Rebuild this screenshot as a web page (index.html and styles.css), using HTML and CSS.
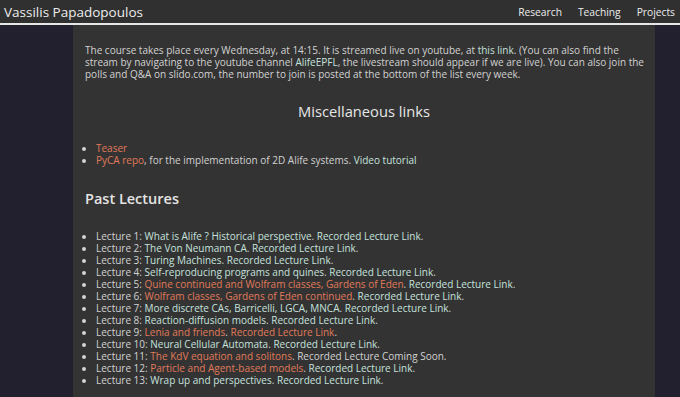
FILE: index.html
```html
<!DOCTYPE html>
<html>
<head>
<meta charset="utf-8">
<link rel="stylesheet" href="styles.css">
</head>
<body>
<header class="topbar">
  <div class="brand">Vassilis Papadopoulos</div>
  <nav class="nav">
    <a href="#">Research</a>
    <a href="#">Teaching</a>
    <a href="#">Projects</a>
  </nav>
</header>
<main class="page">
  <div class="content">
    <p class="intro">The course takes place every Wednesday, at 14:15. It is streamed live on youtube, at <a class="lnk" href="#">this link</a>. (You can also find the stream by navigating to the youtube channel <a class="lnk" href="#">AlifeEPFL</a>, the livestream should appear if we are live). You can also join the polls and Q&amp;A on slido.com, the number to join is posted at the bottom of the list every week.</p>
    <h2 class="misc">Miscellaneous links</h2>
    <ul class="list misc-list">
      <li><a class="hot" href="#">Teaser</a></li>
      <li><a class="hot" href="#">PyCA repo</a>, for the implementation of 2D Alife systems. <a class="lnk" href="#">Video tutorial</a></li>
    </ul>
    <h2 class="past">Past Lectures</h2>
    <ul class="list">
      <li>Lecture 1: <a class="lnk" href="#">What is Alife ? Historical perspective</a>. <a class="lnk" href="#">Recorded Lecture Link</a>.</li>
      <li>Lecture 2: <a class="lnk" href="#">The Von Neumann CA</a>. <a class="lnk" href="#">Recorded Lecture Link</a>.</li>
      <li>Lecture 3: <a class="lnk" href="#">Turing Machines</a>. <a class="lnk" href="#">Recorded Lecture Link</a>.</li>
      <li>Lecture 4: <a class="lnk" href="#">Self-reproducing programs and quines</a>. <a class="lnk" href="#">Recorded Lecture Link</a>.</li>
      <li>Lecture 5: <a class="hot" href="#">Quine continued and Wolfram classes, Gardens of Eden</a>. <a class="lnk" href="#">Recorded Lecture Link</a>.</li>
      <li>Lecture 6: <a class="hot" href="#">Wolfram classes, Gardens of Eden continued</a>. <a class="lnk" href="#">Recorded Lecture Link</a>.</li>
      <li>Lecture 7: <a class="lnk" href="#">More discrete CAs, Barricelli, LGCA, MNCA</a>. <a class="lnk" href="#">Recorded Lecture Link</a>.</li>
      <li>Lecture 8: <a class="lnk" href="#">Reaction-diffusion models</a>. <a class="lnk" href="#">Recorded Lecture Link</a>.</li>
      <li>Lecture 9: <a class="hot" href="#">Lenia and friends</a>. <a class="hot" href="#">Recorded Lecture Link</a>.</li>
      <li>Lecture 10: <a class="lnk" href="#">Neural Cellular Automata</a>. <a class="lnk" href="#">Recorded Lecture Link</a>.</li>
      <li>Lecture 11: <a class="hot" href="#">The KdV equation and solitons</a>. Recorded Lecture Coming Soon.</li>
      <li>Lecture 12: <a class="hot" href="#">Particle and Agent-based models</a>. <a class="lnk" href="#">Recorded Lecture Link</a>.</li>
      <li>Lecture 13: <a class="lnk" href="#">Wrap up and perspectives</a>. <a class="lnk" href="#">Recorded Lecture Link</a>.</li>
    </ul>
  </div>
</main>
</body>
</html>
```
FILE: styles.css
```css
html, body {
  margin: 0;
  padding: 0;
  background: #221f2f;
  font-family: "Open Sans", "Noto Sans", sans-serif;
  color: #d8d8d8;
}
a { text-decoration: none; }
.topbar {
  height: 23px;
  background: #303030;
  border-bottom: 2px solid #e6e6e6;
  display: flex;
  align-items: center;
  justify-content: space-between;
  padding: 0 5px 0 4px;
}
.brand {
  font-size: 13.5px;
  color: #ececec;
}
.nav {
  display: flex;
  gap: 16px;
  font-size: 10.25px;
}
.nav a { color: #ececec; }
.page {
  display: flex;
  padding-left: 73px;
  padding-right: 25px;
}
.content {
  flex: 1;
  background: #333333;
  padding: 19px 6px 20px 12px;
}
.intro {
  margin: 0;
  font-size: 10px;
  line-height: 12px;
  color: #d2d2d2;
}
.lnk { color: #c6e2de; }
.hot { color: #e07a5a; }
.misc {
  text-align: center;
  font-size: 14.7px;
  line-height: 20px;
  font-weight: 500;
  margin: 21px 6px 21px 0;
  color: #e6e6e6;
}
.past {
  font-size: 14.5px;
  line-height: 20px;
  font-weight: 600;
  margin: 23px 0 21px;
  color: #e4e4e4;
}
.list {
  margin: 0;
  padding-left: 11px;
  font-size: 10px;
  line-height: 12px;
  color: #d2d2d2;
}
```
